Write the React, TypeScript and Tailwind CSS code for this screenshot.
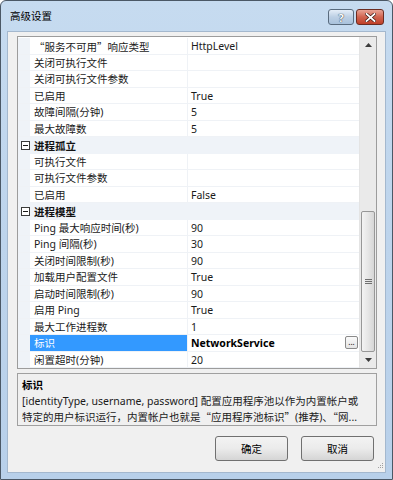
import React from "react";

type Row = { name: string; value?: string; cat?: boolean; selected?: boolean };

const rows: Row[] = [
  { name: "“服务不可用”响应类型", value: "HttpLevel" },
  { name: "关闭可执行文件", value: "" },
  { name: "关闭可执行文件参数", value: "" },
  { name: "已启用", value: "True" },
  { name: "故障间隔(分钟)", value: "5" },
  { name: "最大故障数", value: "5" },
  { name: "进程孤立", cat: true },
  { name: "可执行文件", value: "" },
  { name: "可执行文件参数", value: "" },
  { name: "已启用", value: "False" },
  { name: "进程模型", cat: true },
  { name: "Ping 最大响应时间(秒)", value: "90" },
  { name: "Ping 间隔(秒)", value: "30" },
  { name: "关闭时间限制(秒)", value: "90" },
  { name: "加载用户配置文件", value: "True" },
  { name: "启动时间限制(秒)", value: "90" },
  { name: "启用 Ping", value: "True" },
  { name: "最大工作进程数", value: "1" },
  { name: "标识", value: "NetworkService", selected: true },
  { name: "闲置超时(分钟)", value: "20" },
];

const font = "font-['Noto_Sans','Noto_Sans_CJK_SC',sans-serif]";

// full-width punctuation goes through the CJK font so it keeps its width
function Cjk({ text }: { text: string }) {
  const parts = text.split(/([“”，、])/);
  return (
    <>
      {parts.map((p, i) =>
        /^[“”，、]$/.test(p) ? (
          <span key={i} className="font-['Noto_Sans_CJK_SC',sans-serif]">
            {p}
          </span>
        ) : (
          <React.Fragment key={i}>{p}</React.Fragment>
        )
      )}
    </>
  );
}

function CollapseBox() {
  return (
    <span className="flex h-[9px] w-[9px] items-center justify-center border border-[#3a3a3a] bg-white">
      <span className="h-[1px] w-[5px] bg-[#1a1a1a]" />
    </span>
  );
}

function PropRow({ row }: { row: Row }) {
  if (row.cat) {
    return (
      <div className="flex h-[16.5px] items-center bg-[#eff3f8]">
        <div className="flex w-[12px] shrink-0 justify-center pl-[2px]">
          <CollapseBox />
        </div>
        <span className="pl-[4px] pt-[3px] font-bold text-[#111]">{row.name}</span>
      </div>
    );
  }
  return (
    <div className="flex h-[16.5px] border-b border-[#eff2f6]">
      <div className="w-[12px] shrink-0 bg-[#eff3f8]" />
      <div
        className={
          row.selected
            ? "flex w-[158px] shrink-0 items-center border-r border-[#eff2f6] bg-[#3399ff] pl-[4px] pt-[3px] text-white"
            : "flex w-[158px] shrink-0 items-center border-r border-[#eff2f6] pl-[4px] pt-[3px] text-[#1a1a1a]"
        }
      >
        <span className="whitespace-nowrap">
          <Cjk text={row.name} />
        </span>
      </div>
      <div className="relative flex flex-1 items-center pl-[3px] pt-[3px] text-[#1a1a1a]">
        <span className={row.selected ? "font-bold text-black" : ""}>{row.value}</span>
        {row.selected ? (
          <span className="absolute right-[1px] top-[1px] flex h-[13px] w-[13px] items-end justify-center rounded-[2px] border border-[#8a8a8a] bg-gradient-to-b from-[#fafafa] to-[#e4e4e4] pb-[2px] text-[8px] leading-none text-black">
            ...
          </span>
        ) : null}
      </div>
    </div>
  );
}

function ScrollBar() {
  return (
    <div className="flex w-[17px] shrink-0 flex-col items-center border-l border-[#e4e4e4] bg-[#eaeaea]">
      <div className="flex h-[16px] w-full items-center justify-center">
        <svg width="7" height="4" viewBox="0 0 7 4">
          <path d="M0 4 L3.5 0 L7 4 Z" fill="#3c3c3c" />
        </svg>
      </div>
      <div className="h-[158px]" />
      <div className="flex h-[141px] w-[14px] items-center justify-center rounded-[2px] border border-[#979797] bg-gradient-to-r from-[#f3f3f3] via-[#e6e6e6] to-[#d6d6d6]">
        <div className="flex flex-col gap-[1px]">
          <span className="h-[1px] w-[7px] bg-[#6f6f6f]" />
          <span className="h-[1px] w-[7px] bg-[#6f6f6f]" />
          <span className="h-[1px] w-[7px] bg-[#6f6f6f]" />
        </div>
      </div>
      <div className="flex flex-1 items-center justify-center">
        <svg width="7" height="4" viewBox="0 0 7 4">
          <path d="M0 0 L3.5 4 L7 0 Z" fill="#3c3c3c" />
        </svg>
      </div>
    </div>
  );
}

export default function App() {
  return (
    <div
      className={`relative flex h-[480px] w-[393px] flex-col overflow-hidden rounded-t-[6px] border border-[#4b5866] bg-gradient-to-b from-[#c6dbf0] via-[#bdd4ec] to-[#b8d0ea] text-[10.5px] ${font}`}
    >
      {/* Title bar */}
      <div className="flex h-[30px] shrink-0 items-start justify-between pl-[9px] pr-[8px]">
        <span className="pt-[7px] text-[10.5px] leading-[16px] text-black">高级设置</span>
        <div className="flex gap-[2px] pt-[8px]">
          <div className="flex h-[16px] w-[26px] items-center justify-center rounded-[3px] border border-[#596b7e] bg-gradient-to-b from-[#e5eef8] via-[#bccfe4] to-[#a9c2dc]">
            <span className="text-[11px] font-bold leading-none text-white [text-shadow:0_0_1px_#2a3a4a,0_0_1px_#2a3a4a]">?</span>
          </div>
          <div className="flex h-[16px] w-[28px] items-center justify-center rounded-[3px] border border-[#6b2c22] bg-gradient-to-b from-[#e8a395] via-[#d0634f] to-[#c04028]">
            <svg width="11" height="9" viewBox="0 0 11 9">
              <path d="M1.5 1 L9.5 8 M9.5 1 L1.5 8" stroke="#3a1510" strokeWidth="3.2" strokeLinecap="square" />
              <path d="M1.5 1 L9.5 8 M9.5 1 L1.5 8" stroke="#ffffff" strokeWidth="1.8" strokeLinecap="square" />
            </svg>
          </div>
        </div>
      </div>

      {/* Client area */}
      <div className="mx-[6px] flex h-[442px] flex-col border border-[#a4b8ce] bg-[#f0f0f0] pl-[9px] pr-[8px] pt-[4px]">
        {/* Property grid */}
        <div className="flex h-[333px] border border-[#9c9c9c] bg-white">
          <div className="flex flex-1 flex-col overflow-hidden pt-[1px]">
            {rows.map((row, i) => (
              <PropRow key={i} row={row} />
            ))}
          </div>
          <ScrollBar />
        </div>

        {/* Description */}
        <div className="mt-[4px] h-[53px] border border-[#a0a0a0] bg-[#f0f0f0] px-[4px] pt-[3px] leading-[16px] text-[#1a1a1a]">
          <div className="font-bold text-black">标识</div>
          <div className="whitespace-nowrap">[identityType, username, password] 配置应用程序池以作为内置帐户或</div>
          <div className="whitespace-nowrap">
            <Cjk text="特定的用户标识运行，内置帐户也就是“应用程序池标识”(推荐)、“网..." />
          </div>
        </div>

        {/* Buttons */}
        <div className="mr-[3px] mt-[10px] flex justify-end gap-[13px]">
          <button
            type="button"
            className="flex h-[25px] w-[73px] items-center justify-center rounded-[3px] border border-[#707070] bg-gradient-to-b from-[#f3f3f3] via-[#ebebeb] to-[#d5d5d5] pt-[2px] text-[10.5px] text-black"
          >
            确定
          </button>
          <button
            type="button"
            className="flex h-[25px] w-[73px] items-center justify-center rounded-[3px] border border-[#707070] bg-gradient-to-b from-[#f3f3f3] via-[#ebebeb] to-[#d5d5d5] pt-[2px] text-[10.5px] text-black"
          >
            取消
          </button>
        </div>
      </div>

      {/* Resize grip */}
      <div className="absolute bottom-[11px] right-[9px] grid grid-cols-3 gap-[1px]">
        <span className="h-[1px] w-[1px]" />
        <span className="h-[1px] w-[1px]" />
        <span className="h-[1px] w-[1px] bg-[#a0a0a0]" />
        <span className="h-[1px] w-[1px]" />
        <span className="h-[1px] w-[1px] bg-[#a0a0a0]" />
        <span className="h-[1px] w-[1px] bg-[#a0a0a0]" />
        <span className="h-[1px] w-[1px] bg-[#a0a0a0]" />
        <span className="h-[1px] w-[1px] bg-[#a0a0a0]" />
        <span className="h-[1px] w-[1px] bg-[#a0a0a0]" />
      </div>
    </div>
  );
}
